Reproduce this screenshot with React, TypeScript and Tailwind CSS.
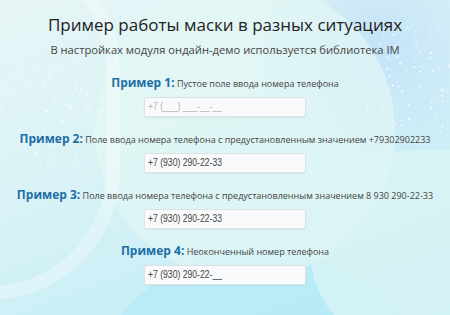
import React from 'react';

type Dot = { x: number; y: number; r: number; o: number };

// deterministic scatter of tiny white dots inside an ellipse
function scatter(seed: number, cx: number, cy: number, rx: number, ry: number, n: number): Dot[] {
  let s = seed;
  const rand = () => {
    s = (s * 9301 + 49297) % 233280;
    return s / 233280;
  };
  const dots: Dot[] = [];
  while (dots.length < n) {
    const x = rand() * 2 - 1;
    const y = rand() * 2 - 1;
    const d = x * x + y * y;
    if (d > 1) continue;
    dots.push({ x: cx + x * rx, y: cy + y * ry, r: 0.7 + rand() * 0.5, o: 0.9 - d * 0.6 });
  }
  return dots;
}

const leftDots = scatter(7, 70, 115, 90, 60, 170);
const rightDots = scatter(13, 410, 85, 70, 70, 110);

const examples = [
  { n: 1, text: 'Пустое поле ввода номера телефона', value: '+7 (___) ___-__-__', empty: true },
  { n: 2, text: 'Поле ввода номера телефона с предустановленным значением +79302902233', value: '+7 (930) 290-22-33' },
  { n: 3, text: 'Поле ввода номера телефона с предустановленным значением 8 930 290-22-33', value: '+7 (930) 290-22-33' },
  { n: 4, text: 'Неоконченный номер телефона', value: '+7 (930) 290-22-__' },
];

function Background() {
  return (
    <div className="pointer-events-none absolute inset-0 overflow-hidden">
      <div className="absolute inset-0 bg-[linear-gradient(160deg,#e6f5f6_0%,#dbf3f6_40%,#c9eef6_75%,#bdebf6_100%)]" />
      <div className="absolute right-[-60px] top-[-80px] h-[260px] w-[260px] rounded-full bg-[radial-gradient(circle,#c4e3f8_0%,rgba(200,230,248,0)_70%)]" />
      <div className="absolute left-[80px] top-[250px] h-[360px] w-[360px] rounded-full bg-[#b4ebf7] opacity-80" />
      <div className="absolute left-[95px] top-[-20px] h-[300px] w-[300px] rounded-full bg-[#e2f6f5] opacity-70" />
      <div className="absolute left-[-140px] top-[-60px] h-[360px] w-[260px] rounded-full border-[14px] border-white/30" />
      <div className="absolute right-[-120px] top-[150px] h-[200px] w-[260px] rounded-full bg-[#ddf5f4] opacity-70" />
      <svg className="absolute inset-0" width="450" height="315">
        {leftDots.map((d, i) => (
          <circle key={'l' + i} cx={d.x} cy={d.y} r={d.r} fill="#fff" opacity={d.o} />
        ))}
        {rightDots.map((d, i) => (
          <circle key={'r' + i} cx={d.x} cy={d.y} r={d.r} fill="#fff" opacity={d.o} />
        ))}
      </svg>
    </div>
  );
}

export default function App() {
  return (
    <div className="relative h-[315px] w-[450px] overflow-hidden font-['Open_Sans',sans-serif]">
      <Background />
      <div className="relative flex flex-col items-center pt-[13px]">
        <h1 className="text-[17px] leading-[24px] text-[#222]">Пример работы маски в разных ситуациях</h1>
        <p className="mt-[5px] text-[11.2px] leading-[16px] text-[#444]">
          В настройках модуля ондайн-демо используется библиотека IM
        </p>

        <div className="mt-[18px] flex flex-col items-center">
          {examples.map((ex) => (
            <div key={ex.n} className="mb-[15px] flex flex-col items-center">
              <div className="whitespace-nowrap text-[9px] leading-[14px] text-[#444]">
                <span className="text-[12px] font-bold text-[#1e6ea6]">Пример {ex.n}:</span> {ex.text}
              </div>
              <div className="mt-[6px] flex h-[20px] w-[162px] items-center rounded-[2px] border border-[#dde2e4] bg-[#f9fafb] pl-[3px] font-['Liberation_Sans',sans-serif] text-[10.5px] shadow-[0_1px_2px_rgba(0,0,0,0.06)]">
                <span className={'origin-left scale-x-[0.82] whitespace-nowrap ' + (ex.empty ? 'text-[#b5b5b5]' : 'text-[#444]')}>
                  {ex.value}
                </span>
              </div>
            </div>
          ))}
        </div>
      </div>
    </div>
  );
}
